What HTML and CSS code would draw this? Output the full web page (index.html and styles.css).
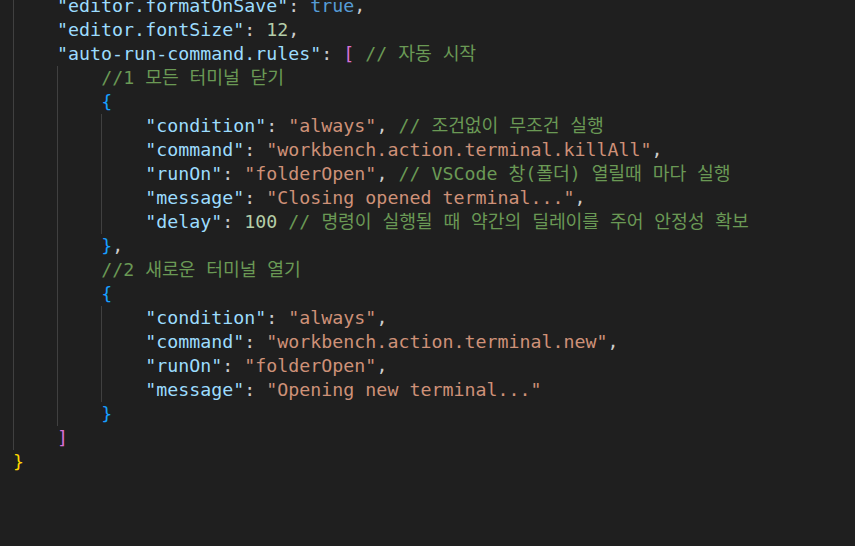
FILE: index.html
```html
<!DOCTYPE html>
<html lang="ko">
<head>
<meta charset="utf-8">
<title>settings.json</title>
<link rel="stylesheet" href="styles.css">
</head>
<body>
<div class="editor">
<div class="code">
<div class="ln"><span class="g"></span><span class="k">"editor.formatOnSave"</span><span class="p">: </span><span class="b">true</span><span class="p">,</span></div>
<div class="ln"><span class="g"></span><span class="k">"editor.fontSize"</span><span class="p">: </span><span class="n">12</span><span class="p">,</span></div>
<div class="ln"><span class="g"></span><span class="k">"auto-run-command.rules"</span><span class="p">: </span><span class="br2">[</span> <span class="c">// <span class="ko">자동 시작</span></span></div>
<div class="ln"><span class="g"></span><span class="g"></span><span class="c">//1 <span class="ko">모든 터미널 닫기</span></span></div>
<div class="ln"><span class="g"></span><span class="g"></span><span class="br3">{</span></div>
<div class="ln"><span class="g"></span><span class="g"></span><span class="g"></span><span class="k">"condition"</span><span class="p">: </span><span class="s">"always"</span><span class="p">, </span><span class="c">// <span class="ko">조건없이 무조건 실행</span></span></div>
<div class="ln"><span class="g"></span><span class="g"></span><span class="g"></span><span class="k">"command"</span><span class="p">: </span><span class="s">"workbench.action.terminal.killAll"</span><span class="p">,</span></div>
<div class="ln"><span class="g"></span><span class="g"></span><span class="g"></span><span class="k">"runOn"</span><span class="p">: </span><span class="s">"folderOpen"</span><span class="p">, </span><span class="c">// VSCode <span class="ko">창</span>(<span class="ko">폴더</span>) <span class="ko">열릴때 마다 실행</span></span></div>
<div class="ln"><span class="g"></span><span class="g"></span><span class="g"></span><span class="k">"message"</span><span class="p">: </span><span class="s">"Closing opened terminal..."</span><span class="p">,</span></div>
<div class="ln"><span class="g"></span><span class="g"></span><span class="g"></span><span class="k">"delay"</span><span class="p">: </span><span class="n">100</span> <span class="c">// <span class="ko">명령이 실행될 때 약간의 딜레이를 주어 안정성 확보</span></span></div>
<div class="ln"><span class="g"></span><span class="g"></span><span class="br3">}</span><span class="p">,</span></div>
<div class="ln"><span class="g"></span><span class="g"></span><span class="c">//2 <span class="ko">새로운 터미널 열기</span></span></div>
<div class="ln"><span class="g"></span><span class="g"></span><span class="br3">{</span></div>
<div class="ln"><span class="g"></span><span class="g"></span><span class="g"></span><span class="k">"condition"</span><span class="p">: </span><span class="s">"always"</span><span class="p">,</span></div>
<div class="ln"><span class="g"></span><span class="g"></span><span class="g"></span><span class="k">"command"</span><span class="p">: </span><span class="s">"workbench.action.terminal.new"</span><span class="p">,</span></div>
<div class="ln"><span class="g"></span><span class="g"></span><span class="g"></span><span class="k">"runOn"</span><span class="p">: </span><span class="s">"folderOpen"</span><span class="p">,</span></div>
<div class="ln"><span class="g"></span><span class="g"></span><span class="g"></span><span class="k">"message"</span><span class="p">: </span><span class="s">"Opening new terminal..."</span></div>
<div class="ln"><span class="g"></span><span class="g"></span><span class="br3">}</span></div>
<div class="ln"><span class="g"></span><span class="br2">]</span></div>
<div class="ln"><span class="br1">}</span></div>
</div>
</div>
</body>
</html>
```
FILE: styles.css
```css
html, body {
  margin: 0;
  padding: 0;
  background: #1f1f1f;
}
.editor {
  width: 855px;
  height: 546px;
  overflow: hidden;
  background: #1f1f1f;
}
.code {
  margin-top: -6px;
  padding-left: 13px;
  font-family: "DejaVu Sans Mono", "Noto Sans CJK KR", monospace;
  font-size: 18.3px;
  line-height: 24px;
  color: #cccccc;
}
.ln {
  height: 24px;
  white-space: pre;
}
.g {
  display: inline-block;
  width: 44.08px;
  height: 24px;
  vertical-align: top;
  box-shadow: inset 1px 0 0 #404040;
}
.k { color: #9cdcfe; }
.s { color: #ce9178; }
.n { color: #b5cea8; }
.b { color: #569cd6; }
.p { color: #cccccc; }
.c { color: #6a9955; }
.ko {
  font-family: "DejaVu Sans Mono", "Noto Sans CJK KR", sans-serif;
  letter-spacing: -0.1px;
}
.br1 { color: #ffd700; }
.br2 { color: #da70d6; }
.br3 { color: #179fff; }
```
